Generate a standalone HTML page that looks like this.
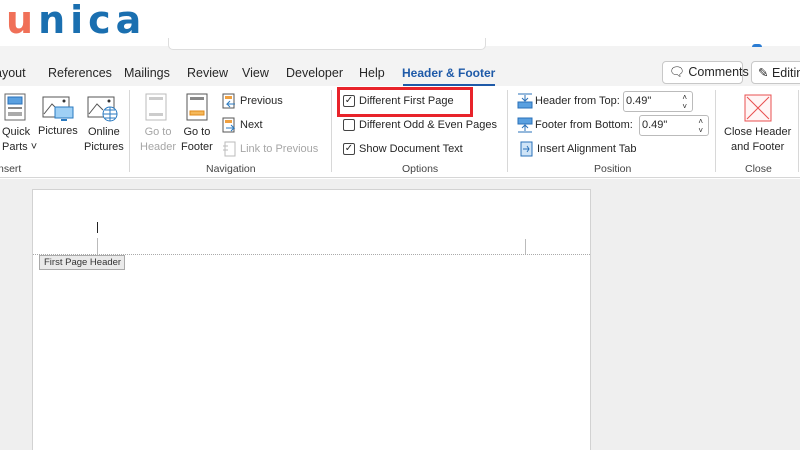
<!DOCTYPE html>
<html><head><meta charset="utf-8"><style>
*{margin:0;padding:0;box-sizing:border-box}
html,body{width:800px;height:450px;overflow:hidden}
body{position:relative;background:#fff;font-family:"Liberation Sans",sans-serif;color:#262626}
.a{position:absolute;white-space:nowrap}
.t{font-size:12.5px}
.s{font-size:11px}
.g{color:#a6a6a6}
.cb{position:absolute;width:12px;height:12px;border:1px solid #444;border-radius:2px;font-size:10px;line-height:10px;text-align:center}
.sep{position:absolute;top:90px;width:1px;height:82px;background:#d8d8d8}
.lbl{position:absolute;top:163px;font-size:10.5px;color:#444;white-space:nowrap}
</style></head><body>
<!-- top -->
<div class="a" style="left:6px;top:-2px;font-family:'DejaVu Sans',sans-serif;font-weight:bold;font-size:38px;letter-spacing:5px"><span style="color:#f07058">u</span><span style="color:#1a6fb0">nica</span></div>
<div class="a" style="left:0;top:46px;width:800px;height:40px;background:#f3f3f3"></div>
<div class="a" style="left:168px;top:38px;width:318px;height:12px;border:1px solid #ddd;border-top:none;border-radius:0 0 5px 5px;background:#fff"></div>
<div class="a" style="left:752px;top:44px;width:10px;height:3px;border-radius:3px 3px 0 0;background:#2b7cd3"></div>
<!-- tabs -->
<div class="a t" style="left:-5px;top:66px">ayout</div>
<div class="a t" style="left:48px;top:66px">References</div>
<div class="a t" style="left:124px;top:66px">Mailings</div>
<div class="a t" style="left:187px;top:66px">Review</div>
<div class="a t" style="left:242px;top:66px">View</div>
<div class="a t" style="left:286px;top:66px">Developer</div>
<div class="a t" style="left:359px;top:66px">Help</div>
<div class="a t" style="left:402px;top:66px;color:#1e5aa8;font-weight:bold;font-size:12px">Header &amp; Footer</div>
<div class="a" style="left:403px;top:84px;width:92px;height:2px;background:#1e5aa8"></div>
<div class="a t" style="left:662px;top:61px;width:81px;height:23px;border:1px solid #c8c8c8;border-radius:4px;background:#fff;padding:3px 0 0 6px">&#128488;&#xFE0E; Comments</div>
<div class="a t" style="left:751px;top:61px;width:60px;height:23px;border:1px solid #c8c8c8;border-radius:4px;background:#fff;padding:3px 0 0 6px">&#9998; Editin</div>
<!-- ribbon -->
<div class="a" style="left:0;top:86px;width:800px;height:92px;background:#fff;border-bottom:1px solid #d6d6d6"></div>
<svg class="a" style="left:4px;top:93px" width="22" height="28"><rect x="1" y="1" width="20" height="26" fill="#fff" stroke="#666"/><rect x="4" y="4" width="14" height="7" fill="#5aa0e0" stroke="#2a70b8"/><rect x="4" y="14" width="14" height="2" fill="#888"/><rect x="4" y="19" width="14" height="4" fill="#aaa"/></svg>
<svg class="a" style="left:42px;top:94px" width="32" height="30"><rect x="1" y="3" width="26" height="20" fill="#fff" stroke="#555"/><path d="M2 20 L10 10 L16 16" fill="none" stroke="#555"/><circle cx="22" cy="7" r="1.5" fill="#333"/><rect x="13" y="13" width="18" height="11" fill="#9fd0f5" stroke="#2a7ac0"/><rect x="19" y="25" width="6" height="2" fill="#2a7ac0"/></svg>
<svg class="a" style="left:87px;top:94px" width="32" height="30"><rect x="1" y="3" width="26" height="20" fill="#fff" stroke="#555"/><path d="M2 20 L10 10 L16 16" fill="none" stroke="#555"/><circle cx="22" cy="7" r="1.5" fill="#333"/><circle cx="23" cy="20" r="7" fill="#fff" stroke="#2a7ac0"/><path d="M16 20h14M23 13v14M18 16h10M18 24h10" stroke="#2a7ac0" fill="none"/></svg>
<div class="a s" style="left:2px;top:125px;line-height:15px">Quick<br>Parts ˅</div>
<div class="a s" style="left:38px;top:125px">Pictures</div>
<div class="a s" style="left:84px;top:125px;line-height:15px;text-align:center">Online<br>Pictures</div>
<div class="lbl" style="left:-2px">nsert</div>
<div class="sep" style="left:129px"></div>
<svg class="a" style="left:145px;top:93px" width="22" height="28"><rect x="1" y="1" width="20" height="26" fill="#fff" stroke="#bbb"/><rect x="4" y="4" width="14" height="3" fill="#ccc"/><rect x="4" y="20" width="14" height="3" fill="#ccc"/></svg>
<svg class="a" style="left:186px;top:93px" width="22" height="28"><rect x="1" y="1" width="20" height="26" fill="#fff" stroke="#555"/><rect x="4" y="4" width="14" height="3" fill="#888"/><rect x="4" y="18" width="14" height="4" fill="#f5b85a" stroke="#e08a1a"/></svg>
<div class="a s g" style="left:140px;top:125px;line-height:15px;text-align:center">Go to<br>Header</div>
<div class="a s" style="left:181px;top:125px;line-height:15px;text-align:center">Go to<br>Footer</div>
<svg class="a" style="left:222px;top:93px" width="14" height="16"><rect x="1" y="1" width="11" height="14" fill="#fff" stroke="#555"/><rect x="3" y="3" width="7" height="3" fill="#f0a040"/><path d="M13 11H5l3-3M5 11l3 3" stroke="#2a7ac0" fill="none"/></svg>
<svg class="a" style="left:222px;top:117px" width="14" height="16"><rect x="1" y="1" width="11" height="14" fill="#fff" stroke="#555"/><rect x="3" y="3" width="7" height="3" fill="#f0a040"/><path d="M4 11h8l-3-3M12 11l-3 3" stroke="#2a7ac0" fill="none"/></svg>
<svg class="a" style="left:222px;top:141px" width="14" height="16"><rect x="3" y="1" width="10" height="14" fill="#fff" stroke="#bbb"/><path d="M1 5h5M1 9h5" stroke="#bbb"/></svg>
<div class="a s" style="left:240px;top:95px">Previous</div>
<div class="a s" style="left:240px;top:119px">Next</div>
<div class="a s g" style="left:240px;top:143px">Link to Previous</div>
<div class="lbl" style="left:206px">Navigation</div>
<div class="sep" style="left:331px"></div>
<div class="cb" style="left:343px;top:95px">✓</div>
<div class="cb" style="left:343px;top:119px"></div>
<div class="cb" style="left:343px;top:143px">✓</div>
<div class="a s" style="left:359px;top:95px">Different First Page</div>
<div class="a s" style="left:359px;top:119px">Different Odd &amp; Even Pages</div>
<div class="a s" style="left:359px;top:143px">Show Document Text</div>
<div class="a" style="left:337px;top:87px;width:136px;height:30px;border:3px solid #e8232a"></div>
<div class="lbl" style="left:402px">Options</div>
<div class="sep" style="left:507px"></div>
<svg class="a" style="left:517px;top:93px" width="16" height="16"><rect x="1" y="9" width="14" height="6" fill="#5aa0e0" stroke="#2a70b8"/><path d="M1 1h14M8 2v6M5 5l3 3 3-3" stroke="#2a70b8" fill="none"/></svg>
<svg class="a" style="left:517px;top:117px" width="16" height="16"><rect x="1" y="1" width="14" height="6" fill="#5aa0e0" stroke="#2a70b8"/><path d="M1 15h14M8 14V8M5 11l3-3 3 3" stroke="#2a70b8" fill="none"/></svg>
<svg class="a" style="left:519px;top:141px" width="14" height="16"><rect x="2" y="1" width="11" height="14" fill="#cfe4f7" stroke="#2a70b8"/><path d="M4 8h6M8 5l2 3-2 3" stroke="#2a70b8" fill="none"/></svg>
<div class="a s" style="left:535px;top:95px">Header from Top:</div>
<div class="a s" style="left:535px;top:119px">Footer from Bottom:</div>
<div class="a s" style="left:537px;top:143px">Insert Alignment Tab</div>
<div class="a s" style="left:623px;top:91px;width:70px;height:21px;border:1px solid #bbb;border-radius:3px;padding:3px 2px">0.49"<span style="position:absolute;right:5px;top:1px;font-size:8px;line-height:9px">˄<br>˅</span></div>
<div class="a s" style="left:639px;top:115px;width:70px;height:21px;border:1px solid #bbb;border-radius:3px;padding:3px 2px">0.49"<span style="position:absolute;right:5px;top:1px;font-size:8px;line-height:9px">˄<br>˅</span></div>
<div class="lbl" style="left:594px">Position</div>
<div class="sep" style="left:715px"></div>
<svg class="a" style="left:744px;top:94px" width="28" height="28"><rect x="1" y="1" width="26" height="26" fill="#fff5f5" stroke="#e85050"/><path d="M3 3L25 25M25 3L3 25" stroke="#e85050"/></svg>
<div class="a s" style="left:724px;top:125px;line-height:15px;text-align:center">Close Header<br>and Footer</div>
<div class="lbl" style="left:745px">Close</div>
<div class="sep" style="left:798px"></div>
<!-- doc area -->
<div class="a" style="left:0;top:179px;width:800px;height:271px;background:#efefef;overflow:hidden">
<div class="a" style="left:32px;top:10px;width:559px;height:280px;background:#fff;border:1px solid #d2d2d2"></div>
</div>
<div class="a" style="left:33px;top:254px;width:557px;border-top:1px dotted #aaa"></div>
<div class="a" style="left:97px;top:222px;width:1px;height:11px;background:#222"></div>
<div class="a" style="left:97px;top:238px;width:1px;height:16px;background:#bbb"></div>
<div class="a" style="left:525px;top:239px;width:1px;height:15px;background:#bbb"></div>
<div class="a" style="left:39px;top:255px;width:86px;height:15px;background:#eaeaea;border:1px solid #aaa;font-size:9.5px;padding:1px 0 0 4px;color:#333">First Page Header</div>
</body></html>
